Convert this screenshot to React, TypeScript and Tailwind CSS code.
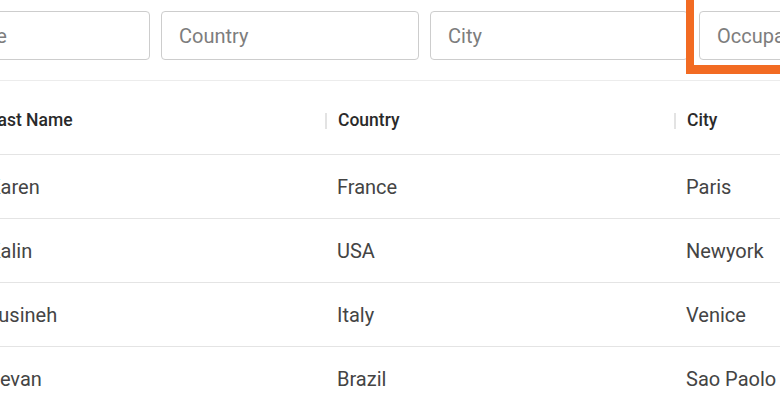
const filters = ["Last Name", "Country", "City", "Occupation"];

const columns = ["Last Name", "Country", "City", "Occupation"];

const rows = [
  ["Karen", "France", "Paris", "Designer"],
  ["Kalin", "USA", "Newyork", "Engineer"],
  ["Lusineh", "Italy", "Venice", "Teacher"],
  ["Sevan", "Brazil", "Sao Paolo", "Doctor"],
];

const FilterBar = () => {
  return (
    <div className="h-[81px] border-b border-[#ececec] ml-[-108px] w-[1200px] flex gap-[11px] pt-[11px]">
      {filters.map((f) => (
        <input
          key={f}
          placeholder={f}
          className="w-[258px] h-[49px] shrink-0 rounded-[4px] border border-[#cdcdcd] bg-white pl-[17px] text-[20px] text-[#444] placeholder:text-[#7d7d7d] outline-none"
        />
      ))}
    </div>
  );
};

const HeaderRow = () => {
  return (
    <div className="grid grid-cols-[349px_349px_349px_349px] h-[74px] pt-[6px] border-b border-[#e4e4e4]">
      {columns.map((c, i) => (
        <div key={c} className="flex items-center">
          {i > 0 ? <span className="w-[2px] h-[16px] bg-[#e3e3e3]" /> : null}
          <span className={`${i > 0 ? "ml-[11px]" : "ml-[12px]"} text-[17.5px] font-medium text-[#2a2a2a]`}>
            {c}
          </span>
        </div>
      ))}
    </div>
  );
};

export default function App() {
  return (
    <div className="relative w-[780px] h-[408px] overflow-hidden bg-white font-['Roboto',sans-serif]">
      <FilterBar />
      <div className="ml-[-24px] w-[1400px]">
        <HeaderRow />
        {rows.map((r) => (
          <div key={r[0]} className="grid grid-cols-[349px_349px_349px_349px] h-[64px] border-b border-[#e4e4e4]">
            {r.map((v, i) => (
              <div key={i} className="flex items-center pl-[12px] text-[20px] text-[#444]">
                {v}
              </div>
            ))}
          </div>
        ))}
      </div>
      <div className="absolute left-[686px] top-[-20px] w-[200px] h-[94px] border-[8px] border-b-[9px] border-[#f26b22]" />
    </div>
  );
}
